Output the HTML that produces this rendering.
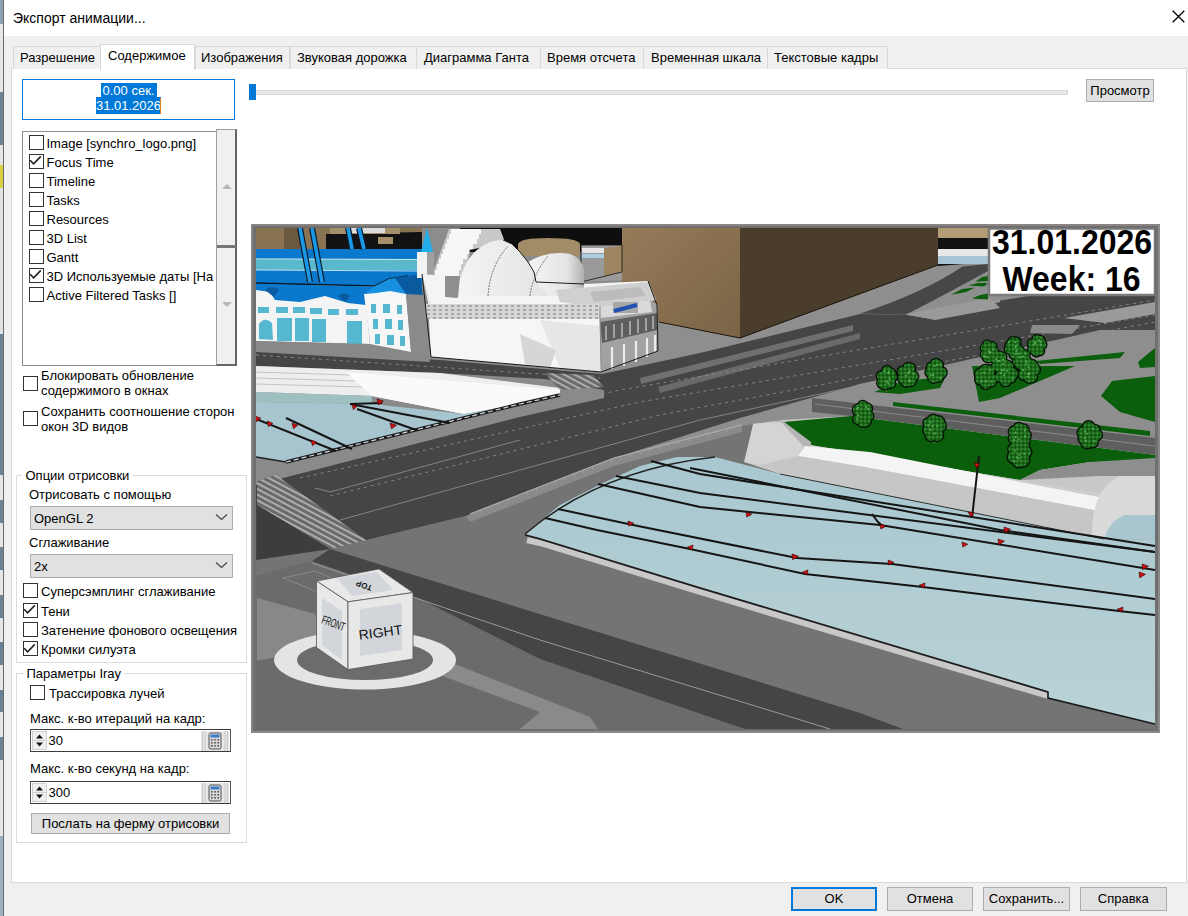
<!DOCTYPE html>
<html><head><meta charset="utf-8">
<style>
*{box-sizing:border-box;margin:0;padding:0}
html,body{width:1188px;height:916px;overflow:hidden;background:#f0f0f0}
body{position:relative;font-family:"Liberation Sans",sans-serif;font-size:13px;color:#000}
.a{position:absolute}
.t{position:absolute;white-space:nowrap;line-height:15px;font-size:13px}
.tab{position:absolute;top:46px;height:23px;background:#f0f0f0;border:1px solid #d9d9d9;border-bottom:none}
.cb{position:absolute;width:15px;height:15px;border:1.5px solid #333;background:#fff}
.cb svg{position:absolute;left:-1.5px;top:-1.5px}
.btn{position:absolute;background:#e1e1e1;border:1px solid #adadad;text-align:center;font-size:13px}
.spin{width:201.5px;height:23.7px;background:#fff;border:1.5px solid #555;border-top:1.5px solid #3a3a3a;border-bottom:1.5px solid #3a3a3a}
.sv{position:absolute;left:18px;top:3px;line-height:15px;font-size:13px}
.grp{position:absolute;border:1px solid #dcdcdc}
</style></head><body>
<!-- left strip (background app) -->
<div class="a" style="left:0;top:0px;width:3px;height:24px;background:#8aa0b4"></div>
<div class="a" style="left:0;top:24px;width:3px;height:68px;background:#e6e6e6"></div>
<div class="a" style="left:0;top:92px;width:3px;height:53px;background:#6e8296"></div>
<div class="a" style="left:0;top:145px;width:3px;height:20px;background:#e6e6e6"></div>
<div class="a" style="left:0;top:165px;width:3px;height:23px;background:#d8d040"></div>
<div class="a" style="left:0;top:188px;width:3px;height:146px;background:#e2e2e2"></div>
<div class="a" style="left:0;top:334px;width:3px;height:141px;background:#6e8296"></div>
<div class="a" style="left:0;top:475px;width:3px;height:25px;background:#e6e6e6"></div>
<div class="a" style="left:0;top:500px;width:3px;height:23px;background:#6e8296"></div>
<div class="a" style="left:0;top:523px;width:3px;height:24px;background:#e6e6e6"></div>
<div class="a" style="left:0;top:547px;width:3px;height:23px;background:#6e8296"></div>
<div class="a" style="left:0;top:570px;width:3px;height:25px;background:#e6e6e6"></div>
<div class="a" style="left:0;top:595px;width:3px;height:23px;background:#6e8296"></div>
<div class="a" style="left:0;top:618px;width:3px;height:24px;background:#e6e6e6"></div>
<div class="a" style="left:0;top:642px;width:3px;height:23px;background:#6e8296"></div>
<div class="a" style="left:0;top:665px;width:3px;height:25px;background:#e6e6e6"></div>
<div class="a" style="left:0;top:690px;width:3px;height:22px;background:#6e8296"></div>
<div class="a" style="left:0;top:712px;width:3px;height:25px;background:#e6e6e6"></div>
<div class="a" style="left:0;top:737px;width:3px;height:23px;background:#6e8296"></div>
<div class="a" style="left:0;top:760px;width:3px;height:76px;background:#e6e6e6"></div>
<div class="a" style="left:0;top:836px;width:3px;height:80px;background:#a0b0bc"></div>
<div class="a" style="left:2.5px;top:0;width:1.5px;height:916px;background:#6a6a6a"></div>
<!-- title bar -->
<div class="a" style="left:4px;top:0;width:1184px;height:36px;background:#fff"></div>
<div class="t" style="left:13px;top:10px;font-size:14px;line-height:16px;color:#000">Экспорт анимации...</div>
<svg class="a" style="left:1172px;top:10px" width="13" height="13" viewBox="0 0 13 13"><path d="M0.7 0.7L12.3 12.3M12.3 0.7L0.7 12.3" stroke="#000" stroke-width="1.3"/></svg>

<!-- tab panel -->
<div class="a" style="left:11px;top:68px;width:1176px;height:815px;background:#fff;border:1px solid #d9d9d9"></div>
<div class="tab" style="left:13px;width:88px"></div>
<div class="tab" style="left:195px;width:95px"></div>
<div class="tab" style="left:290px;width:127px"></div>
<div class="tab" style="left:416px;width:125px"></div>
<div class="tab" style="left:540px;width:104px"></div>
<div class="tab" style="left:643px;width:125px"></div>
<div class="tab" style="left:767px;width:121px"></div>
<div class="a" style="left:100px;top:44px;width:95px;height:26px;background:#fff;border:1px solid #d9d9d9;border-bottom:none"></div>
<div class="t" style="left:20px;top:50px">Разрешение</div>
<div class="t" style="left:108px;top:48px">Содержимое</div>
<div class="t" style="left:201px;top:50px">Изображения</div>
<div class="t" style="left:297px;top:50px">Звуковая дорожка</div>
<div class="t" style="left:424px;top:50px">Диаграмма Ганта</div>
<div class="t" style="left:547px;top:50px">Время отсчета</div>
<div class="t" style="left:651px;top:50px">Временная шкала</div>
<div class="t" style="left:774px;top:50px">Текстовые кадры</div>

<!-- time edit -->
<div class="a" style="left:22px;top:79px;width:213px;height:41px;border:1.5px solid #0078d7;background:#fff"></div>
<div class="a" style="left:101px;top:83px;width:56px;height:14.5px;background:#0078d7"></div>
<div class="a" style="left:95.5px;top:97.3px;width:65px;height:16.5px;background:#0078d7"></div>
<div class="t" style="left:22px;width:213px;top:83px;text-align:center;color:#fff">0.00 сек.</div>
<div class="t" style="left:22px;width:213px;top:98px;text-align:center;color:#fff">31.01.2026</div>
<div class="a caret" style="left:160px;top:97.5px;width:1.2px;height:16px;background:#e08020"></div>
<!-- slider -->
<div class="a" style="left:255px;top:90px;width:813px;height:5px;background:#e7eaea;border:1px solid #d6d6d6"></div>
<div class="a" style="left:249px;top:84px;width:7px;height:15.5px;background:#0078d7"></div>
<div class="btn" style="left:1086px;top:79px;width:68px;height:23px;line-height:21px">Просмотр</div>

<!-- list -->
<div class="a" style="left:22px;top:131px;width:196px;height:235px;border:1px solid #8c8c8c;background:#fff"></div>
<div class="a" style="left:216px;top:129px;width:21px;height:237px;background:#f0f0f0;border:1px solid #a0a0a0;border-right:2px solid #666;border-bottom:2px solid #666"></div>
<div class="a" style="left:217px;top:245px;width:19px;height:2.5px;background:#777"></div>
<svg class="a" style="left:221px;top:182px" width="12" height="8"><path d="M1 7L6 2L11 7Z" fill="#b8b8b8"/></svg>
<svg class="a" style="left:221px;top:301px" width="12" height="8"><path d="M1 1L6 6L11 1Z" fill="#b8b8b8"/></svg>

<!-- SCENE -->
<div class="a" style="left:251px;top:224px;width:909px;height:509px;background:#6f6f6f;border-top:2px solid #8a8484;border-left:2px solid #8a8484;border-right:2px solid #8a8a8a;border-bottom:2px solid #8a8a8a"></div>
<svg class="a" style="left:256px;top:228px" width="899" height="501" viewBox="256 228 899 501">
<defs>
<linearGradient id="brL" x1="0" y1="0" x2="1" y2="1"><stop offset="0" stop-color="#957b58"/><stop offset="1" stop-color="#7a6446"/></linearGradient>
<linearGradient id="dome" x1="0" y1="0" x2="1" y2="0"><stop offset="0" stop-color="#f4f4f4"/><stop offset="0.7" stop-color="#e4e4e4"/><stop offset="1" stop-color="#b0b0b0"/></linearGradient>
<linearGradient id="wat" x1="0" y1="0" x2="0" y2="1"><stop offset="0" stop-color="#a8c7d0"/><stop offset="1" stop-color="#b9d3d6"/></linearGradient>
<pattern id="cw" width="5" height="5" patternUnits="userSpaceOnUse" patternTransform="rotate(28)"><rect width="5" height="5" fill="#6a6a6a"/><rect width="5" height="1.8" fill="#b4b4b4"/></pattern>
<pattern id="tree" width="4" height="4" patternUnits="userSpaceOnUse"><rect width="4" height="4" fill="#1a6a1a"/><rect x="0.5" y="0.5" width="1.4" height="1.4" fill="#4aa04a"/><rect x="2.5" y="2.5" width="1.2" height="1.2" fill="#0a300a"/></pattern>
<pattern id="win" width="6" height="4" patternUnits="userSpaceOnUse"><rect width="6" height="4" fill="#d6d6d6"/><rect x="1" y="1" width="3" height="2" fill="#a8a8a8"/></pattern>
</defs>
<!-- base -->
<rect x="256" y="228" width="899" height="501" fill="#8c8c8c"/>
<!-- upper plaza -->
<polygon points="256,330 938,262 1155,228 1155,480 256,480" fill="#8e8e8e"/>
<!-- upper main road -->
<polygon points="256,349 440,360 602,374 700,353 860,314 906,314.7 935.4,319.5 1000,300.6 1155,275 1155,330 1100,330 860,384 740,418 614,458 466,516 330,549 256,566" fill="#454545"/>
<!-- upper road right branches -->
<path d="M860,313.6 Q925,292 962.5,266.4 L988,264 L988,271 Q950,292 906,314.7 Z" fill="#474747"/>
<polygon points="906,314.7 1000,299.4 1000,302 935.4,319.5" fill="#969696"/>
<!-- islands -->
<polygon points="905,314 990,298 1000,308 935,320" fill="#9a9a9a"/>
<polygon points="1064,318 1155,302 1155,314 1105,323" fill="#9a9a9a"/>
<polygon points="1032,325 1080,325 1072,334 1030,333" fill="#8a8a8a"/>
<polygon points="640,378 853,325 853,331 641,384" fill="#707070"/>
<polygon points="658,387 860,333 860,339 660,393" fill="#6a6a6a"/>
<!-- lane dashes -->
<g stroke="#8a8a8a" stroke-width="0.9" stroke-dasharray="3 4" fill="none">
<path d="M260,470 L620,390 L1155,300"/>
<path d="M300,478 L640,402 L1155,315"/>
<path d="M330,496 L660,415 L1155,322"/>
<path d="M256,355 L600,378"/>
</g>
<path d="M340,520 L700,420 L1000,355" stroke="#8a8a8a" stroke-width="0.9" fill="none"/>
<path d="M315,488 L330,492 L520,440" stroke="#8a8a8a" stroke-width="0.9" fill="none"/>
<!-- plaza under main road right -->
<polygon points="760,418 860,384 1155,330 1155,410 812,398" fill="#8e8e8e"/>
<!-- green patches upper -->
<polygon points="874,392 900,382 946,376 940,388 900,394" fill="#0a5e0c"/>
<polygon points="972,366 1075,366 1000,398 979,402" fill="#0a5e0c"/>
<polygon points="1036,361 1125,352 1120,358 1040,364" fill="#0a5e0c"/>
<polygon points="1138,362 1155,348 1155,367 1140,368" fill="#0a5e0c"/>
<polygon points="1101,396 1112,381 1155,376 1155,422 1120,412" fill="#0a5e0c"/>
<polygon points="951,294.7 962,289 975,287.6 966,292" fill="#0a5e0c"/>
<polygon points="968,285.5 978,283 988,283 984,286.5" fill="#0a5e0c"/>
<polygon points="975.5,281.7 982,277 988,276 988,281" fill="#0a5e0c"/>
<polygon points="972,298.5 980,295 988,293.5 988,299.4" fill="#0a5e0c"/>
<!-- track & lawn -->
<polygon points="812,398 1155,438 1155,455 851,416 812,412" fill="#5e5e5e"/>
<path d="M815,404 L1155,446" stroke="#8a8a8a" stroke-width="1"/>
<polygon points="893,402 1150,431 1150,436 893,406" fill="#0a5e0c"/>
<polygon points="753,424 783,420 851,416 1155,455 1155,540 1104,539 780,474 744,462" fill="#c8c8c8"/>
<polygon points="783,422 851,416 1155,455 1155,462 1090,462 1040,470 1020,480 809,445" fill="#0a5e0c"/>
<polygon points="753,424 781,422 811,445 1020,480 1104,494 1104,539 780,474 744,462" fill="#cdcdcd"/>
<polygon points="775,421 783,421 811,442 811,448 803,446" fill="#b4b4b4"/>
<polygon points="805,446 870,452 1020,482 1104,498 1104,512 870,468 798,456" fill="#f4f4f4"/>
<polygon points="798,456 870,468 1104,512 1104,539 780,474 744,462" fill="#c6c6c6"/>
<polygon points="753,424 781,422 803,446 798,456 760,465 744,462" fill="#d4d4d4"/>
<polygon points="714,457 744,440 744,462" fill="#909090"/>
<polygon points="1020,480 1040,470 1090,462 1155,458 1155,476 1100,476" fill="#8e8e8e"/>
<path d="M1092,540 Q1090,490 1120,476 L1155,476 L1155,540 Z" fill="#dadada"/>
<path d="M1104,539 Q1110,520 1125,515 L1155,515 L1155,540 Z" fill="#a9c6cf"/>
<!-- left wedge -->
<polygon points="256,366 440,373 545,379 604,390 604,398 520,417 256,485" fill="#8a8a8a"/>
<polygon points="256,366 440,373 560,388 560,395 520,404 464,414 372,396 256,392" fill="#eeeeee"/>
<polygon points="345,372 560,390 560,395 520,404 464,414 372,396" fill="#fafafa"/>
<g stroke="#c4c4c4" stroke-width="1.2"><path d="M256,372 L350,375"/><path d="M256,378 L355,381"/><path d="M256,384 L362,387"/></g>
<polygon points="256,392 372,396 372,404 256,402" fill="#9fc0c0"/>
<polygon points="256,402 372,404 464,414 520,404 286,462 256,457" fill="#a6c5cf"/>
<path d="M286,462 L520,404 L560,395" stroke="#1e1e1e" stroke-width="3.5" fill="none"/>
<path d="M286,462 L520,404 L560,395" stroke="#cfd8dc" stroke-width="1.2" stroke-dasharray="5 3" fill="none"/>
<path d="M256,457 L286,462" stroke="#222" stroke-width="1.5"/>
<polygon points="545,373 593,375 604,387 560,390" fill="url(#cw)"/>
<!-- crosswalk -->
<polygon points="257,481 276,475 373,545 330,549 257,505" fill="url(#cw)"/>
<polygon points="257,505 330,549 312,561 257,575" fill="#3d3d3d"/>
<polygon points="257,575 312,561 330,575 257,598" fill="#5a5a5a"/>
<!-- bridge side -->
<polygon points="256,560 330,549 466,516 614,458 742,426 753,424 744,462 780,474 1104,539 1155,540 1155,729 256,729" fill="#747474"/>
<polygon points="466,516 614,458 742,426 742,432 614,466 470,522" fill="#8a8a8a"/>
<path d="M470,514 L614,458 L742,425" stroke="#b0b0b0" stroke-width="1.2" fill="none"/>
<path d="M480,511 L614,460 L735,428" stroke="#a0a0a0" stroke-width="3" stroke-dasharray="1 9" fill="none"/>
<!-- bottom ground -->
<polygon points="256,576 312,561 418,598 540,659 745,729 256,729" fill="#6b6b6b"/>
<polygon points="330,549 614,637 860,713 903,729 745,729 540,659 418,598 312,561" fill="#454545"/>
<path d="M312,563 L540,640 L830,729" stroke="#9a9a9a" stroke-width="1" fill="none"/>
<polygon points="257,598 315,614 330,645 257,661" fill="#888888"/>
<polygon points="405,652 429,654 590,717 598,729 520,729 540,712 410,664" fill="#8a8a8a"/>
<path d="M283,578 L315,571 L360,590 L330,597 Z" stroke="#8a8a8a" stroke-width="1" fill="none"/>
<!-- water big -->
<polygon points="525,534 560,505 601,484 640,466 677,457 715,457 780,474 1104,539 1155,540 1155,724 1048,698 1048,691 700,587 540,538" fill="url(#wat)"/>
<path d="M527,540 L540,543 L700,592 L1048,696" stroke="#c8c8c8" stroke-width="6" fill="none"/>
<path d="M525,535 L540,539 L700,588 L1048,692 L1048,698 L1155,724" stroke="#1a1a1a" stroke-width="1.6" fill="none"/>
<path d="M525,534 Q600,470 715,457" stroke="#222" stroke-width="1.5" fill="none"/>
<path d="M780,474 L1104,539" stroke="#333" stroke-width="1" fill="none"/>
<!-- water lines -->
<g stroke="#151515" stroke-width="2" fill="none">
<path d="M545,518 L597,530 L690,549 L805,574 L923,587 L1119,611 L1155,615"/>
<path d="M558,509 L633,525 L797,558 L892,564 L1155,599"/>
<path d="M598,484 L700,507 L880,525 L1155,570"/>
<path d="M616,476 L700,493 L1155,552"/>
<path d="M651,461 L700,474 L1155,546"/>
<path d="M690,468 L1000,530 L1155,552"/>
<path d="M979,456 L972,518"/>
<path d="M872,514 L878,522 L884,527"/>
<path d="M256,419 L336,451"/>
<path d="M286,418 L352,449"/>
<path d="M350,404 L450,423"/>
<path d="M357,409 L416,430"/>
<path d="M350,404 L382,403"/>
</g>
<g fill="#d01010" stroke="#300" stroke-width="0.6">
<path d="M746.0,512.0 l5.8,2.2 l-5.0,2.9z"/><path d="M880.0,524.0 l5.8,2.2 l-5.0,2.9z"/><path d="M1004.0,527.0 l6.5,2.2 l-5.8,3.6z"/><path d="M998.0,539.0 l6.5,2.2 l-5.8,3.6z"/>
<path d="M962.0,542.0 l5.8,2.2 l-5.0,2.9z"/><path d="M792.0,554.0 l6.5,2.2 l-5.8,3.6z"/><path d="M888.0,560.0 l5.8,2.2 l-5.0,2.9z"/><path d="M808.0,570.0 l-5.8,2.2 l5.0,2.9z"/>
<path d="M925.0,583.0 l-5.8,2.2 l5.0,2.9z"/><path d="M1123.0,607.0 l-5.8,2.2 l5.0,2.9z"/><path d="M1142.0,564.0 l6.5,2.2 l-5.8,3.6z"/><path d="M1139.0,572.0 l6.5,2.2 l-5.8,3.6z"/>
<path d="M628.0,521.0 l5.8,2.2 l-5.0,2.9z"/><path d="M693.0,545.0 l-5.8,2.2 l5.0,2.9z"/><path d="M974.0,463.0 l5.8,0.7 l-2.9,4.3z"/><path d="M968.0,512.0 l5.8,0.7 l-2.9,4.3z"/>
<path d="M255.0,416.0 l5.8,2.2 l-4.3,3.6z"/><path d="M267.0,421.0 l5.8,2.2 l-4.3,3.6z"/><path d="M292.0,423.0 l5.8,2.2 l-4.3,3.6z"/><path d="M311.0,440.0 l5.8,2.2 l-4.3,3.6z"/>
<path d="M352.0,404.0 l5.0,2.2 l-3.6,3.6z"/><path d="M377.0,399.0 l6.5,2.2 l-5.0,3.6z"/><path d="M390.0,423.0 l6.5,2.2 l-5.0,3.6z"/>
</g>
<!-- ===== buildings top left ===== -->
<rect x="256" y="228" width="166" height="21" fill="#8a7352"/>
<rect x="284" y="228" width="16" height="21" fill="#6a583f"/>
<polygon points="326,234 422,232 422,250 326,250" fill="#121212"/>
<rect x="330" y="228" width="70" height="6" fill="#a58f6a"/>
<rect x="347" y="228" width="38" height="5" fill="#dcdcdc"/>
<rect x="378" y="237" width="15" height="7" fill="#a58f6a"/>
<rect x="256" y="249" width="166" height="36" fill="#0a78cc"/>
<rect x="256" y="259" width="162" height="11" fill="#5ab8cc"/>
<path d="M256,258.8 L418,259.5 M256,270 L418,271" stroke="#e8f4f8" stroke-width="0.8"/>
<path d="M256,283 L374,286 L389,279 L408,276" stroke="#0a1a2a" stroke-width="1.3" fill="none"/>
<polygon points="256,284 374,286.5 374,306 256,304" fill="#0a78cc"/>
<polygon points="366,293 374,286.5 389,279 408,276 420,274 422,296 406,295" fill="#1890e0"/>
<polygon points="395,278 420,274 423,296 408,297" fill="#0a5aa0"/>
<!-- facade -->
<polygon points="256,290 270,292 275,300 300,302 325,296 348,303 366,305 370,344 256,341" fill="#f4f4f4"/>
<g fill="#56b8d0">
<path d="M259,339 L259,324 Q265,316 272,323 L273,340 Z"/><rect x="277" y="318" width="15" height="23"/><rect x="295" y="318" width="14" height="23"/><rect x="312" y="319" width="14" height="23"/><rect x="347" y="321" width="15" height="23"/>
<rect x="258" y="307" width="11" height="6"/><rect x="276" y="307" width="12" height="6"/><rect x="293" y="307" width="12" height="6"/><rect x="310" y="308" width="12" height="6"/><rect x="328" y="309" width="11" height="6"/><rect x="346" y="309" width="12" height="6"/>
</g>
<g fill="#0a5aa0"><path d="M265,290 q7,-6 14,0 l-5,7z"/><path d="M338,296 q6,-5 12,0 l-5,6z"/></g>
<polygon points="364,294 376,293 390,291 406,294 411,352 371,349" fill="#f6f6f6"/>
<g fill="#56b8d0">
<rect x="371" y="304" width="5" height="9"/><rect x="383" y="304" width="7" height="9"/><rect x="397" y="305" width="5" height="9"/>
<rect x="373" y="319" width="5" height="10"/><rect x="385" y="319" width="7" height="10"/><rect x="398" y="320" width="5" height="10"/>
<rect x="375" y="334" width="5" height="10"/><rect x="387" y="335" width="7" height="10"/><rect x="400" y="336" width="5" height="10"/>
</g>
<polygon points="406,294 423,295 429,356 411,352" fill="#8a8a8a"/>
<polygon points="256,341 370,344 411,352 429,356 430,362 256,352" fill="#888888"/>
<g stroke="#0a1a2a" stroke-width="6"><path d="M300,228 L310,282"/><path d="M312,228 L322,282"/><path d="M348,228 L352,249"/><path d="M359,228 L364,249"/></g>
<g stroke="#1a98e6" stroke-width="3.6"><path d="M300,228 L310,282"/><path d="M312,228 L322,282"/><path d="M348,228 L352,249"/><path d="M359,228 L364,249"/></g>
<!-- ===== brown building ===== -->
<polygon points="622,228 740,228 740,338 659,322 622,310" fill="url(#brL)"/>
<polygon points="740,228 938,228 938,265 740,338" fill="#4a3d2c"/>
<path d="M659,322 L740,338 L938,265" stroke="#1a140c" stroke-width="1" fill="none"/>
<polygon points="938,228 990,228 990,262 938,266" fill="#121212"/>
<rect x="938" y="228" width="50" height="10" fill="#b49c74"/>
<rect x="938" y="249" width="50" height="7" fill="#e8e8e8"/>
<rect x="938" y="256" width="50" height="8" fill="#a9c4d4"/>
<!-- ===== white building ===== -->
<polygon points="460,228 622,228 622,252 460,252" fill="#0e0e0e"/>
<path d="M518,244 Q520,238 548,238 Q578,238 580,244 L580,256 L518,256 Z" fill="#a28c68"/>
<polygon points="581,245 622,245 622,280 581,282" fill="#9a9a9a"/>
<rect x="582" y="248" width="24" height="5" fill="#e8e8e8"/>
<rect x="582" y="254" width="24" height="4" fill="#a9cfe0"/>
<polygon points="604,248 622,246 622,272 604,276" fill="#9c8560"/>
<path d="M581,245 L622,245 L622,272 L581,282 Z" stroke="#111" stroke-width="0.8" fill="none"/>
<polygon points="449,229 500,229 505,242 470,250 464,296 434,296 434,270" fill="#c8c8c8"/>
<g fill="#f6f6f6">
<rect x="451" y="229" width="30" height="5"/><rect x="449" y="234" width="30" height="5"/><rect x="447" y="239" width="30" height="5"/><rect x="445" y="244" width="28" height="5"/><rect x="443" y="249" width="26" height="5"/><rect x="441" y="254" width="26" height="5"/><rect x="439" y="259" width="24" height="5"/><rect x="437" y="264" width="24" height="6"/><rect x="435" y="270" width="24" height="6"/>
</g>
<polygon points="417,252 434,252 434,278 417,278" fill="#f2f2f2"/>
<polygon points="427,252 434,252 434,276 427,276" fill="#a0a0a0"/>
<polygon points="421,252 427,228 433,252" fill="#22aee8"/>
<path d="M456,298 C460,262 478,240 503,240 L512,244 L520,252 L528,262 L534,272 L536,282 L584,284 L584,298 Z" fill="url(#dome)"/>
<path d="M528,262 Q548,250 570,254 Q582,258 584,270 L584,298 L550,298 L536,282 L534,272 Z" fill="url(#dome)"/>
<path d="M503,240 L512,244 L520,252 L528,262 L534,272 L536,282 L584,284" stroke="#1a1a1a" stroke-width="1" fill="none"/>
<path d="M488,296 Q490,266 508,246 M530,296 Q532,276 548,256" stroke="#555" stroke-width="0.8" fill="none" stroke-dasharray="2 1"/>
<polygon points="422,274 445,276 445,296 584,296 584,284 648,281 656,300 600,308 430,304" fill="#f4f4f4"/>
<polygon points="445,276 460,276 458,298 445,297" fill="#8e8e8e"/>
<polygon points="556,290 648,282 656,300 600,308 560,302" fill="#d0d0d0"/>
<polygon points="590,292 640,287 646,296 594,302" fill="#bcbcbc"/>
<polygon points="422,274 428,302 431,357 601,372 600,306 430,304" fill="#f6f6f6"/>
<rect x="426" y="304" width="174" height="15" fill="url(#win)"/>
<polygon points="540,320 600,326 600,372 560,368" fill="#e6e6e6"/>
<polygon points="520,334 556,350 550,368 525,364" fill="#d6d6d6"/>
<polygon points="599,306 650,300 658,305 658,351 601,372" fill="#a2a2a2"/>
<polygon points="599,306 650,300 652,312 600,318" fill="#dadada"/>
<polygon points="600,322 657,313 657,330 602,343" fill="#5e5e5e"/>
<g stroke="#cfcfcf" stroke-width="1.2"><path d="M606,326 v14 M614,324 v14 M622,323 v14 M630,321 v14 M638,319 v14 M646,318 v13 M653,316 v13"/></g>
<g stroke="#ececec" stroke-width="2.2"><path d="M612,347 v22 M624,344 v22 M636,341 v21 M647,338 v19 M655,335 v17"/></g>
<rect x="613" y="302" width="25" height="11" fill="#a8a8a8"/>
<path d="M614,311 L637,305" stroke="#2050b0" stroke-width="4"/>
<path d="M422,274 L431,357 L601,372 L658,351 L657,305 L648,281" stroke="#1a1a1a" stroke-width="1" fill="none"/>
<path d="M600,306 L601,372" stroke="#888" stroke-width="0.8"/>
<!-- trees -->
<path d="M886.5,387.6 v4" stroke="#7a6a50" stroke-width="1"/>
<path d="M908,384.20000000000005 v4" stroke="#7a6a50" stroke-width="1"/>
<path d="M935.8,380.6 v4" stroke="#7a6a50" stroke-width="1"/>
<path d="M989,359.8 v4" stroke="#7a6a50" stroke-width="1"/>
<path d="M1014,356.8 v4" stroke="#7a6a50" stroke-width="1"/>
<path d="M1037,354.40000000000003 v4" stroke="#7a6a50" stroke-width="1"/>
<path d="M1000,370.0 v4" stroke="#7a6a50" stroke-width="1"/>
<path d="M1022,367.0 v4" stroke="#7a6a50" stroke-width="1"/>
<path d="M986,386.6 v4" stroke="#7a6a50" stroke-width="1"/>
<path d="M1006,383.4 v4" stroke="#7a6a50" stroke-width="1"/>
<path d="M1029,380.6 v4" stroke="#7a6a50" stroke-width="1"/>
<path d="M863,424.4 v4" stroke="#7a6a50" stroke-width="1"/>
<path d="M934,439.2 v4" stroke="#7a6a50" stroke-width="1"/>
<path d="M1019.5,446.4 v4" stroke="#7a6a50" stroke-width="1"/>
<path d="M1019.5,464.2 v4" stroke="#7a6a50" stroke-width="1"/>
<path d="M1089.5,445.4 v4" stroke="#7a6a50" stroke-width="1"/>
<g fill="#061006"><circle cx="886.5" cy="378.0" r="8.1"/><circle cx="891.9" cy="376.9" r="6.1"/><circle cx="890.3" cy="383.3" r="6.1"/><circle cx="884.9" cy="384.9" r="5.6"/><circle cx="882.4" cy="382.9" r="6.4"/><circle cx="881.3" cy="375.8" r="5.7"/><circle cx="886.9" cy="370.8" r="6.0"/><circle cx="890.7" cy="373.4" r="6.0"/><circle cx="908.0" cy="374.6" r="8.1"/><circle cx="913.4" cy="376.2" r="6.0"/><circle cx="910.8" cy="380.8" r="6.4"/><circle cx="906.1" cy="381.4" r="6.5"/><circle cx="903.2" cy="378.1" r="6.4"/><circle cx="903.0" cy="371.7" r="6.5"/><circle cx="908.0" cy="367.4" r="5.6"/><circle cx="910.4" cy="368.1" r="5.7"/><circle cx="935.8" cy="371.0" r="8.1"/><circle cx="941.2" cy="372.5" r="6.6"/><circle cx="938.8" cy="377.1" r="5.7"/><circle cx="933.5" cy="377.5" r="6.5"/><circle cx="930.4" cy="372.5" r="6.1"/><circle cx="931.2" cy="367.1" r="5.7"/><circle cx="935.7" cy="363.8" r="6.1"/><circle cx="938.6" cy="364.8" r="5.5"/><circle cx="989.0" cy="351.0" r="7.5"/><circle cx="993.9" cy="351.9" r="5.4"/><circle cx="991.1" cy="357.0" r="6.1"/><circle cx="987.9" cy="357.4" r="6.1"/><circle cx="984.8" cy="354.5" r="5.2"/><circle cx="984.7" cy="347.8" r="5.1"/><circle cx="987.0" cy="344.9" r="5.5"/><circle cx="992.3" cy="346.1" r="5.3"/><circle cx="1014.0" cy="348.0" r="7.5"/><circle cx="1018.8" cy="349.7" r="5.6"/><circle cx="1017.2" cy="353.0" r="5.8"/><circle cx="1013.7" cy="354.6" r="5.4"/><circle cx="1009.1" cy="349.1" r="5.6"/><circle cx="1009.6" cy="345.0" r="5.1"/><circle cx="1012.7" cy="341.6" r="5.7"/><circle cx="1015.9" cy="341.9" r="5.7"/><circle cx="1037.0" cy="345.6" r="7.5"/><circle cx="1041.9" cy="344.6" r="5.6"/><circle cx="1039.9" cy="351.0" r="5.4"/><circle cx="1036.3" cy="352.1" r="5.4"/><circle cx="1032.7" cy="348.9" r="5.7"/><circle cx="1032.3" cy="343.5" r="5.5"/><circle cx="1036.7" cy="339.0" r="5.1"/><circle cx="1040.2" cy="340.6" r="5.8"/><circle cx="1000.0" cy="362.0" r="7.2"/><circle cx="1004.8" cy="363.3" r="5.1"/><circle cx="1003.5" cy="366.3" r="5.5"/><circle cx="997.8" cy="367.4" r="5.3"/><circle cx="996.0" cy="365.5" r="5.0"/><circle cx="995.6" cy="359.3" r="5.1"/><circle cx="999.8" cy="356.0" r="5.7"/><circle cx="1002.3" cy="356.7" r="5.2"/><circle cx="1022.0" cy="359.0" r="7.2"/><circle cx="1026.8" cy="360.5" r="5.1"/><circle cx="1026.1" cy="362.4" r="5.8"/><circle cx="1019.8" cy="364.4" r="5.8"/><circle cx="1017.6" cy="361.8" r="5.8"/><circle cx="1018.2" cy="355.1" r="5.1"/><circle cx="1021.6" cy="353.0" r="5.7"/><circle cx="1025.4" cy="354.7" r="5.4"/><circle cx="986.0" cy="377.0" r="8.4"/><circle cx="991.9" cy="378.7" r="6.3"/><circle cx="991.0" cy="381.1" r="6.5"/><circle cx="985.8" cy="384.2" r="6.0"/><circle cx="980.3" cy="379.5" r="6.3"/><circle cx="980.4" cy="374.2" r="6.7"/><circle cx="985.1" cy="369.9" r="6.1"/><circle cx="989.0" cy="370.8" r="6.7"/><circle cx="1006.0" cy="373.0" r="8.7"/><circle cx="1012.0" cy="373.6" r="6.9"/><circle cx="1010.9" cy="377.6" r="6.2"/><circle cx="1005.5" cy="380.8" r="6.5"/><circle cx="1000.7" cy="376.7" r="6.4"/><circle cx="1001.1" cy="368.5" r="5.9"/><circle cx="1003.1" cy="366.1" r="6.0"/><circle cx="1008.6" cy="366.0" r="5.9"/><circle cx="1029.0" cy="371.0" r="8.4"/><circle cx="1034.9" cy="369.4" r="6.3"/><circle cx="1032.1" cy="377.2" r="6.1"/><circle cx="1029.2" cy="378.2" r="5.9"/><circle cx="1023.8" cy="374.6" r="6.4"/><circle cx="1024.1" cy="366.8" r="6.1"/><circle cx="1028.7" cy="363.8" r="6.4"/><circle cx="1032.6" cy="365.2" r="6.1"/><circle cx="863.0" cy="414.0" r="8.4"/><circle cx="868.3" cy="416.0" r="6.1"/><circle cx="865.3" cy="421.1" r="6.6"/><circle cx="862.6" cy="421.8" r="6.2"/><circle cx="858.7" cy="418.9" r="6.6"/><circle cx="858.3" cy="409.9" r="6.7"/><circle cx="862.7" cy="406.2" r="6.4"/><circle cx="867.0" cy="408.6" r="6.3"/><circle cx="934.0" cy="428.0" r="9.1"/><circle cx="939.9" cy="426.1" r="7.1"/><circle cx="937.3" cy="435.1" r="7.1"/><circle cx="931.1" cy="435.4" r="6.8"/><circle cx="928.2" cy="430.2" r="6.1"/><circle cx="929.0" cy="423.2" r="6.7"/><circle cx="933.4" cy="419.6" r="6.2"/><circle cx="938.4" cy="422.3" r="7.2"/><circle cx="1019.5" cy="436.0" r="8.7"/><circle cx="1025.5" cy="435.3" r="6.4"/><circle cx="1024.3" cy="440.7" r="6.5"/><circle cx="1016.6" cy="442.8" r="6.4"/><circle cx="1013.7" cy="438.3" r="6.1"/><circle cx="1014.4" cy="431.8" r="6.8"/><circle cx="1018.8" cy="428.3" r="6.5"/><circle cx="1023.2" cy="429.9" r="6.6"/><circle cx="1019.5" cy="453.0" r="9.4"/><circle cx="1026.1" cy="452.1" r="6.5"/><circle cx="1023.0" cy="460.1" r="7.5"/><circle cx="1018.8" cy="461.4" r="7.2"/><circle cx="1013.7" cy="457.0" r="7.3"/><circle cx="1013.7" cy="449.0" r="6.6"/><circle cx="1017.0" cy="445.2" r="6.3"/><circle cx="1023.6" cy="446.4" r="6.7"/><circle cx="1089.5" cy="435.0" r="9.1"/><circle cx="1096.1" cy="434.9" r="7.0"/><circle cx="1092.4" cy="442.0" r="6.6"/><circle cx="1087.1" cy="442.3" r="7.3"/><circle cx="1083.6" cy="438.5" r="6.3"/><circle cx="1083.2" cy="432.8" r="6.9"/><circle cx="1088.7" cy="427.3" r="7.2"/><circle cx="1094.6" cy="430.1" r="6.4"/></g>
<g fill="url(#tree)"><circle cx="886.5" cy="378.0" r="6.8"/><circle cx="891.9" cy="376.9" r="4.8"/><circle cx="890.3" cy="383.3" r="4.8"/><circle cx="884.9" cy="384.9" r="4.3"/><circle cx="882.4" cy="382.9" r="5.1"/><circle cx="881.3" cy="375.8" r="4.4"/><circle cx="886.9" cy="370.8" r="4.7"/><circle cx="890.7" cy="373.4" r="4.7"/><circle cx="908.0" cy="374.6" r="6.8"/><circle cx="913.4" cy="376.2" r="4.7"/><circle cx="910.8" cy="380.8" r="5.1"/><circle cx="906.1" cy="381.4" r="5.2"/><circle cx="903.2" cy="378.1" r="5.1"/><circle cx="903.0" cy="371.7" r="5.2"/><circle cx="908.0" cy="367.4" r="4.3"/><circle cx="910.4" cy="368.1" r="4.4"/><circle cx="935.8" cy="371.0" r="6.8"/><circle cx="941.2" cy="372.5" r="5.3"/><circle cx="938.8" cy="377.1" r="4.4"/><circle cx="933.5" cy="377.5" r="5.2"/><circle cx="930.4" cy="372.5" r="4.8"/><circle cx="931.2" cy="367.1" r="4.4"/><circle cx="935.7" cy="363.8" r="4.8"/><circle cx="938.6" cy="364.8" r="4.2"/><circle cx="989.0" cy="351.0" r="6.2"/><circle cx="993.9" cy="351.9" r="4.1"/><circle cx="991.1" cy="357.0" r="4.8"/><circle cx="987.9" cy="357.4" r="4.8"/><circle cx="984.8" cy="354.5" r="3.9"/><circle cx="984.7" cy="347.8" r="3.8"/><circle cx="987.0" cy="344.9" r="4.2"/><circle cx="992.3" cy="346.1" r="4.0"/><circle cx="1014.0" cy="348.0" r="6.2"/><circle cx="1018.8" cy="349.7" r="4.3"/><circle cx="1017.2" cy="353.0" r="4.5"/><circle cx="1013.7" cy="354.6" r="4.1"/><circle cx="1009.1" cy="349.1" r="4.3"/><circle cx="1009.6" cy="345.0" r="3.8"/><circle cx="1012.7" cy="341.6" r="4.4"/><circle cx="1015.9" cy="341.9" r="4.4"/><circle cx="1037.0" cy="345.6" r="6.2"/><circle cx="1041.9" cy="344.6" r="4.3"/><circle cx="1039.9" cy="351.0" r="4.1"/><circle cx="1036.3" cy="352.1" r="4.1"/><circle cx="1032.7" cy="348.9" r="4.4"/><circle cx="1032.3" cy="343.5" r="4.2"/><circle cx="1036.7" cy="339.0" r="3.8"/><circle cx="1040.2" cy="340.6" r="4.5"/><circle cx="1000.0" cy="362.0" r="5.9"/><circle cx="1004.8" cy="363.3" r="3.8"/><circle cx="1003.5" cy="366.3" r="4.2"/><circle cx="997.8" cy="367.4" r="4.0"/><circle cx="996.0" cy="365.5" r="3.7"/><circle cx="995.6" cy="359.3" r="3.8"/><circle cx="999.8" cy="356.0" r="4.4"/><circle cx="1002.3" cy="356.7" r="3.9"/><circle cx="1022.0" cy="359.0" r="5.9"/><circle cx="1026.8" cy="360.5" r="3.8"/><circle cx="1026.1" cy="362.4" r="4.5"/><circle cx="1019.8" cy="364.4" r="4.5"/><circle cx="1017.6" cy="361.8" r="4.5"/><circle cx="1018.2" cy="355.1" r="3.8"/><circle cx="1021.6" cy="353.0" r="4.4"/><circle cx="1025.4" cy="354.7" r="4.1"/><circle cx="986.0" cy="377.0" r="7.1"/><circle cx="991.9" cy="378.7" r="5.0"/><circle cx="991.0" cy="381.1" r="5.2"/><circle cx="985.8" cy="384.2" r="4.7"/><circle cx="980.3" cy="379.5" r="5.0"/><circle cx="980.4" cy="374.2" r="5.4"/><circle cx="985.1" cy="369.9" r="4.8"/><circle cx="989.0" cy="370.8" r="5.4"/><circle cx="1006.0" cy="373.0" r="7.4"/><circle cx="1012.0" cy="373.6" r="5.6"/><circle cx="1010.9" cy="377.6" r="4.9"/><circle cx="1005.5" cy="380.8" r="5.2"/><circle cx="1000.7" cy="376.7" r="5.1"/><circle cx="1001.1" cy="368.5" r="4.6"/><circle cx="1003.1" cy="366.1" r="4.7"/><circle cx="1008.6" cy="366.0" r="4.6"/><circle cx="1029.0" cy="371.0" r="7.1"/><circle cx="1034.9" cy="369.4" r="5.0"/><circle cx="1032.1" cy="377.2" r="4.8"/><circle cx="1029.2" cy="378.2" r="4.6"/><circle cx="1023.8" cy="374.6" r="5.1"/><circle cx="1024.1" cy="366.8" r="4.8"/><circle cx="1028.7" cy="363.8" r="5.1"/><circle cx="1032.6" cy="365.2" r="4.8"/><circle cx="863.0" cy="414.0" r="7.1"/><circle cx="868.3" cy="416.0" r="4.8"/><circle cx="865.3" cy="421.1" r="5.3"/><circle cx="862.6" cy="421.8" r="4.9"/><circle cx="858.7" cy="418.9" r="5.3"/><circle cx="858.3" cy="409.9" r="5.4"/><circle cx="862.7" cy="406.2" r="5.1"/><circle cx="867.0" cy="408.6" r="5.0"/><circle cx="934.0" cy="428.0" r="7.8"/><circle cx="939.9" cy="426.1" r="5.8"/><circle cx="937.3" cy="435.1" r="5.8"/><circle cx="931.1" cy="435.4" r="5.5"/><circle cx="928.2" cy="430.2" r="4.8"/><circle cx="929.0" cy="423.2" r="5.4"/><circle cx="933.4" cy="419.6" r="4.9"/><circle cx="938.4" cy="422.3" r="5.9"/><circle cx="1019.5" cy="436.0" r="7.4"/><circle cx="1025.5" cy="435.3" r="5.1"/><circle cx="1024.3" cy="440.7" r="5.2"/><circle cx="1016.6" cy="442.8" r="5.1"/><circle cx="1013.7" cy="438.3" r="4.8"/><circle cx="1014.4" cy="431.8" r="5.5"/><circle cx="1018.8" cy="428.3" r="5.2"/><circle cx="1023.2" cy="429.9" r="5.3"/><circle cx="1019.5" cy="453.0" r="8.1"/><circle cx="1026.1" cy="452.1" r="5.2"/><circle cx="1023.0" cy="460.1" r="6.2"/><circle cx="1018.8" cy="461.4" r="5.9"/><circle cx="1013.7" cy="457.0" r="6.0"/><circle cx="1013.7" cy="449.0" r="5.3"/><circle cx="1017.0" cy="445.2" r="5.0"/><circle cx="1023.6" cy="446.4" r="5.4"/><circle cx="1089.5" cy="435.0" r="7.8"/><circle cx="1096.1" cy="434.9" r="5.7"/><circle cx="1092.4" cy="442.0" r="5.3"/><circle cx="1087.1" cy="442.3" r="6.0"/><circle cx="1083.6" cy="438.5" r="5.0"/><circle cx="1083.2" cy="432.8" r="5.6"/><circle cx="1088.7" cy="427.3" r="5.9"/><circle cx="1094.6" cy="430.1" r="5.1"/></g>
<g fill="#58b058"><circle cx="888.2" cy="373.0" r="1"/><circle cx="888.1" cy="383.3" r="1"/><circle cx="886.8" cy="381.5" r="1"/><circle cx="888.6" cy="371.7" r="1"/><circle cx="889.6" cy="379.3" r="1"/><circle cx="884.1" cy="371.2" r="1"/><circle cx="913.6" cy="373.7" r="1"/><circle cx="909.5" cy="371.7" r="1"/><circle cx="908.1" cy="373.0" r="1"/><circle cx="906.2" cy="375.8" r="1"/><circle cx="909.0" cy="380.4" r="1"/><circle cx="910.2" cy="380.8" r="1"/><circle cx="940.0" cy="378.1" r="1"/><circle cx="930.9" cy="375.3" r="1"/><circle cx="934.7" cy="366.0" r="1"/><circle cx="933.3" cy="374.9" r="1"/><circle cx="940.3" cy="364.4" r="1"/><circle cx="937.2" cy="364.4" r="1"/><circle cx="984.1" cy="355.9" r="1"/><circle cx="987.0" cy="357.1" r="1"/><circle cx="993.3" cy="349.4" r="1"/><circle cx="988.6" cy="351.3" r="1"/><circle cx="990.6" cy="352.3" r="1"/><circle cx="989.6" cy="352.6" r="1"/><circle cx="1015.4" cy="342.2" r="1"/><circle cx="1015.4" cy="347.6" r="1"/><circle cx="1015.9" cy="346.1" r="1"/><circle cx="1016.2" cy="351.1" r="1"/><circle cx="1008.8" cy="342.2" r="1"/><circle cx="1015.9" cy="354.1" r="1"/><circle cx="1034.9" cy="341.9" r="1"/><circle cx="1040.3" cy="342.2" r="1"/><circle cx="1033.6" cy="344.7" r="1"/><circle cx="1039.1" cy="340.3" r="1"/><circle cx="1035.1" cy="343.4" r="1"/><circle cx="1040.6" cy="344.8" r="1"/><circle cx="1003.3" cy="363.7" r="1"/><circle cx="1003.3" cy="360.1" r="1"/><circle cx="996.0" cy="359.5" r="1"/><circle cx="1003.2" cy="359.3" r="1"/><circle cx="998.3" cy="361.0" r="1"/><circle cx="999.1" cy="360.9" r="1"/><circle cx="1019.7" cy="357.1" r="1"/><circle cx="1019.1" cy="353.8" r="1"/><circle cx="1023.0" cy="356.4" r="1"/><circle cx="1025.4" cy="353.5" r="1"/><circle cx="1026.4" cy="361.3" r="1"/><circle cx="1026.6" cy="363.8" r="1"/><circle cx="985.7" cy="381.1" r="1"/><circle cx="984.0" cy="372.6" r="1"/><circle cx="986.5" cy="381.6" r="1"/><circle cx="981.7" cy="381.2" r="1"/><circle cx="991.6" cy="381.4" r="1"/><circle cx="990.3" cy="369.9" r="1"/><circle cx="1012.3" cy="378.5" r="1"/><circle cx="1000.5" cy="373.0" r="1"/><circle cx="1003.6" cy="370.1" r="1"/><circle cx="1004.0" cy="375.3" r="1"/><circle cx="1007.1" cy="370.8" r="1"/><circle cx="1001.9" cy="370.3" r="1"/><circle cx="1028.9" cy="373.9" r="1"/><circle cx="1028.0" cy="373.8" r="1"/><circle cx="1028.5" cy="367.3" r="1"/><circle cx="1029.5" cy="373.8" r="1"/><circle cx="1023.3" cy="369.9" r="1"/><circle cx="1028.0" cy="376.5" r="1"/><circle cx="858.2" cy="415.4" r="1"/><circle cx="857.1" cy="408.4" r="1"/><circle cx="866.3" cy="406.9" r="1"/><circle cx="858.1" cy="407.7" r="1"/><circle cx="867.6" cy="409.0" r="1"/><circle cx="857.3" cy="419.3" r="1"/><circle cx="928.2" cy="425.0" r="1"/><circle cx="934.8" cy="433.5" r="1"/><circle cx="930.6" cy="422.6" r="1"/><circle cx="930.7" cy="429.9" r="1"/><circle cx="937.3" cy="426.2" r="1"/><circle cx="932.3" cy="426.3" r="1"/><circle cx="1024.7" cy="430.5" r="1"/><circle cx="1014.2" cy="439.9" r="1"/><circle cx="1025.0" cy="436.3" r="1"/><circle cx="1018.7" cy="439.4" r="1"/><circle cx="1015.4" cy="432.4" r="1"/><circle cx="1015.5" cy="437.3" r="1"/><circle cx="1014.8" cy="450.7" r="1"/><circle cx="1016.9" cy="457.6" r="1"/><circle cx="1014.4" cy="461.3" r="1"/><circle cx="1019.2" cy="454.7" r="1"/><circle cx="1019.0" cy="458.6" r="1"/><circle cx="1024.1" cy="454.0" r="1"/><circle cx="1085.0" cy="431.2" r="1"/><circle cx="1085.0" cy="438.2" r="1"/><circle cx="1094.7" cy="441.2" r="1"/><circle cx="1086.0" cy="440.7" r="1"/><circle cx="1086.8" cy="433.8" r="1"/><circle cx="1092.8" cy="428.5" r="1"/></g>
<!-- nav cube -->
<ellipse cx="365" cy="660" rx="91" ry="29.5" fill="#e4e4e4"/>
<ellipse cx="365" cy="660" rx="68" ry="20" fill="#6c6c6c"/>
<polygon points="316.5,581 379,569 413,592.6 348,601.8" fill="#e8e8e8" stroke="#555" stroke-width="0.8"/>
<polygon points="316.5,581 348,601.8 348,669.6 316.5,647.4" fill="#e8e8e8" stroke="#555" stroke-width="0.8"/>
<polygon points="348,601.8 413,592.6 413,659 348,669.6" fill="#e8e8e8" stroke="#555" stroke-width="0.8"/>
<polygon points="337,578 377,572 393,590 352,596" fill="#d2d6da"/>
<polygon points="322,598 342,611 342,660 322,645" fill="#d2d6da"/>
<polygon points="360,609 402,603 402,650 360,656" fill="#d2d6da"/>
<text x="381" y="637" font-family="Liberation Sans" font-size="13.5" transform="rotate(-7 381 637)" text-anchor="middle" fill="#111" textLength="44" lengthAdjust="spacingAndGlyphs">RIGHT</text>
<text x="332" y="627" font-family="Liberation Sans" font-size="12" transform="rotate(20 332 627)" text-anchor="middle" fill="#111" textLength="24" lengthAdjust="spacingAndGlyphs">FRONT</text>
<text x="365" y="583" font-family="Liberation Sans" font-weight="bold" font-size="8" transform="rotate(200 365 583)" text-anchor="middle" fill="#111">TOP</text>
<!-- date box -->
<rect x="989" y="228.5" width="166" height="66.5" fill="#fff" stroke="#7a7a7a" stroke-width="2.5"/>
<text transform="translate(0,254.5) scale(1,1.1) translate(0,-254.5)" x="1072" y="254.5" font-family="Liberation Sans" font-weight="bold" font-size="32" text-anchor="middle" fill="#000">31.01.2026</text>
<text transform="translate(0,291.3) scale(1,1.1) translate(0,-291.3)" x="1071.5" y="291.3" font-family="Liberation Sans" font-weight="bold" font-size="32" text-anchor="middle" fill="#000">Week: 16</text>
</svg>

<!-- /SCENE -->
<!-- list rows -->
<div class="cb" style="left:28.5px;top:134.8px"></div>
<div class="t" style="left:46.5px;top:135.6px">Image [synchro_logo.png]</div>
<div class="cb on" style="left:28.5px;top:153.8px"><svg width="15" height="15" viewBox="0 0 15 15"><path d="M2.2 7.2L5.6 10.8L12.8 3.4" fill="none" stroke="#222" stroke-width="1.6"/></svg></div>
<div class="t" style="left:46.5px;top:154.6px">Focus Time</div>
<div class="cb" style="left:28.5px;top:172.8px"></div>
<div class="t" style="left:46.5px;top:173.6px">Timeline</div>
<div class="cb" style="left:28.5px;top:191.8px"></div>
<div class="t" style="left:46.5px;top:192.6px">Tasks</div>
<div class="cb" style="left:28.5px;top:210.8px"></div>
<div class="t" style="left:46.5px;top:211.6px">Resources</div>
<div class="cb" style="left:28.5px;top:229.8px"></div>
<div class="t" style="left:46.5px;top:230.6px">3D List</div>
<div class="cb" style="left:28.5px;top:248.8px"></div>
<div class="t" style="left:46.5px;top:249.6px">Gantt</div>
<div class="cb on" style="left:28.5px;top:267.8px"><svg width="15" height="15" viewBox="0 0 15 15"><path d="M2.2 7.2L5.6 10.8L12.8 3.4" fill="none" stroke="#222" stroke-width="1.6"/></svg></div>
<div class="t" style="left:46.5px;top:268.6px;width:170px;overflow:hidden">3D Используемые даты [На</div>
<div class="cb" style="left:28.5px;top:286.8px"></div>
<div class="t" style="left:46.5px;top:287.6px">Active Filtered Tasks []</div>
<!-- two checkboxes -->
<div class="cb" style="left:22.5px;top:376px"></div>
<div class="t" style="left:41px;top:368.3px">Блокировать обновление</div>
<div class="t" style="left:41px;top:383.4px">содержимого в окнах</div>
<div class="cb" style="left:22.5px;top:410.5px"></div>
<div class="t" style="left:41px;top:403.8px">Сохранить соотношение сторон</div>
<div class="t" style="left:41px;top:418.7px">окон 3D видов</div>

<!-- group 1 -->
<div class="grp" style="left:15.5px;top:474.5px;width:231px;height:188px"></div>
<div class="t" style="left:22px;top:468.2px;background:#fff;padding:0 3px 0 3.5px">Опции отрисовки</div>
<div class="t" style="left:29px;top:486.8px">Отрисовать с помощью</div>
<div class="btn" style="left:29.5px;top:505.5px;width:203px;height:24px;text-align:left"></div>
<div class="t" style="left:34px;top:510.6px">OpenGL 2</div>
<svg class="a" style="left:215px;top:513px" width="13" height="8"><path d="M1 1.5L6.5 6.5L12 1.5" fill="none" stroke="#444" stroke-width="1.2"/></svg>
<div class="t" style="left:29px;top:535.3px">Сглаживание</div>
<div class="btn" style="left:29.5px;top:553.5px;width:203px;height:24px;text-align:left"></div>
<div class="t" style="left:34px;top:559px">2x</div>
<svg class="a" style="left:215px;top:561px" width="13" height="8"><path d="M1 1.5L6.5 6.5L12 1.5" fill="none" stroke="#444" stroke-width="1.2"/></svg>
<div class="cb" style="left:22.5px;top:583.3px"></div>
<div class="t" style="left:41px;top:584px">Суперсэмплинг сглаживание</div>
<div class="cb on" style="left:22.5px;top:602.6px"><svg width="15" height="15" viewBox="0 0 15 15"><path d="M2.2 7.2L5.6 10.8L12.8 3.4" fill="none" stroke="#222" stroke-width="1.6"/></svg></div>
<div class="t" style="left:41px;top:603.6px">Тени</div>
<div class="cb" style="left:22.5px;top:621.9px"></div>
<div class="t" style="left:41px;top:622.9px">Затенение фонового освещения</div>
<div class="cb on" style="left:22.5px;top:641.2px"><svg width="15" height="15" viewBox="0 0 15 15"><path d="M2.2 7.2L5.6 10.8L12.8 3.4" fill="none" stroke="#222" stroke-width="1.6"/></svg></div>
<div class="t" style="left:41px;top:642px">Кромки силуэта</div>

<!-- group 2 -->
<div class="grp" style="left:15.5px;top:673px;width:231px;height:169.5px"></div>
<div class="t" style="left:23px;top:666.2px;background:#fff;padding:0 3px 0 3.5px">Параметры Iray</div>
<div class="cb" style="left:29.5px;top:685px"></div>
<div class="t" style="left:49px;top:686px">Трассировка лучей</div>
<div class="t" style="left:30px;top:710.6px">Макс. к-во итераций на кадр:</div>
<div class="spin a" style="left:29.5px;top:728.7px"><svg class="a" style="left:1.5px;top:1.5px" width="15" height="19" viewBox="0 0 15 19"><rect x="0" y="0" width="15" height="19" fill="#f0f0f0"/><rect x="0.5" y="0.5" width="14" height="9" fill="none" stroke="#d0d0d0"/><rect x="0.5" y="9.5" width="14" height="9" fill="none" stroke="#d0d0d0"/><path d="M4 7.5L7.5 3.5L11 7.5Z" fill="#111"/><path d="M4 11.5L7.5 15.5L11 11.5Z" fill="#111"/></svg><div class="sv">30</div><svg class="a" style="right:1px;top:1px" width="28" height="20" viewBox="0 0 28 20"><rect x="0" y="0" width="28" height="20" fill="#e6e6e6"/><path d="M1.5 0v20M4 0v20M24 0v20M26.5 0v20" stroke="#c8c8c8" stroke-width="1"/><rect x="8" y="2" width="12" height="16" rx="1.5" fill="#d8d8d8" stroke="#555" stroke-width="1"/><rect x="9.5" y="3.5" width="9" height="3" fill="#3a7cc8"/><g fill="#555"><rect x="10" y="8" width="1.6" height="1.6"/><rect x="13.2" y="8" width="1.6" height="1.6"/><rect x="16.4" y="8" width="1.6" height="1.6"/><rect x="10" y="11" width="1.6" height="1.6"/><rect x="13.2" y="11" width="1.6" height="1.6"/><rect x="16.4" y="11" width="1.6" height="1.6"/><rect x="10" y="14" width="1.6" height="1.6"/><rect x="13.2" y="14" width="1.6" height="1.6"/><rect x="16.4" y="14" width="1.6" height="1.6"/></g></svg></div>
<div class="t" style="left:30px;top:760.8px">Макс. к-во секунд на кадр:</div>
<div class="spin a" style="left:29.5px;top:780.7px"><svg class="a" style="left:1.5px;top:1.5px" width="15" height="19" viewBox="0 0 15 19"><rect x="0" y="0" width="15" height="19" fill="#f0f0f0"/><rect x="0.5" y="0.5" width="14" height="9" fill="none" stroke="#d0d0d0"/><rect x="0.5" y="9.5" width="14" height="9" fill="none" stroke="#d0d0d0"/><path d="M4 7.5L7.5 3.5L11 7.5Z" fill="#111"/><path d="M4 11.5L7.5 15.5L11 11.5Z" fill="#111"/></svg><div class="sv">300</div><svg class="a" style="right:1px;top:1px" width="28" height="20" viewBox="0 0 28 20"><rect x="0" y="0" width="28" height="20" fill="#e6e6e6"/><path d="M1.5 0v20M4 0v20M24 0v20M26.5 0v20" stroke="#c8c8c8" stroke-width="1"/><rect x="8" y="2" width="12" height="16" rx="1.5" fill="#d8d8d8" stroke="#555" stroke-width="1"/><rect x="9.5" y="3.5" width="9" height="3" fill="#3a7cc8"/><g fill="#555"><rect x="10" y="8" width="1.6" height="1.6"/><rect x="13.2" y="8" width="1.6" height="1.6"/><rect x="16.4" y="8" width="1.6" height="1.6"/><rect x="10" y="11" width="1.6" height="1.6"/><rect x="13.2" y="11" width="1.6" height="1.6"/><rect x="16.4" y="11" width="1.6" height="1.6"/><rect x="10" y="14" width="1.6" height="1.6"/><rect x="13.2" y="14" width="1.6" height="1.6"/><rect x="16.4" y="14" width="1.6" height="1.6"/></g></svg></div>
<div class="btn" style="left:31px;top:813px;width:199px;height:21px;line-height:19px">Послать на ферму отрисовки</div>

<!-- bottom buttons -->
<div class="btn" style="left:791px;top:886.5px;width:86px;height:24px;line-height:20px;border:2px solid #0078d7">OK</div>
<div class="btn" style="left:887px;top:886.5px;width:86px;height:24px;line-height:22px">Отмена</div>
<div class="btn" style="left:983px;top:886.5px;width:87px;height:24px;line-height:22px">Сохранить...</div>
<div class="btn" style="left:1080px;top:886.5px;width:86.5px;height:24px;line-height:22px">Справка</div>
</body></html>
